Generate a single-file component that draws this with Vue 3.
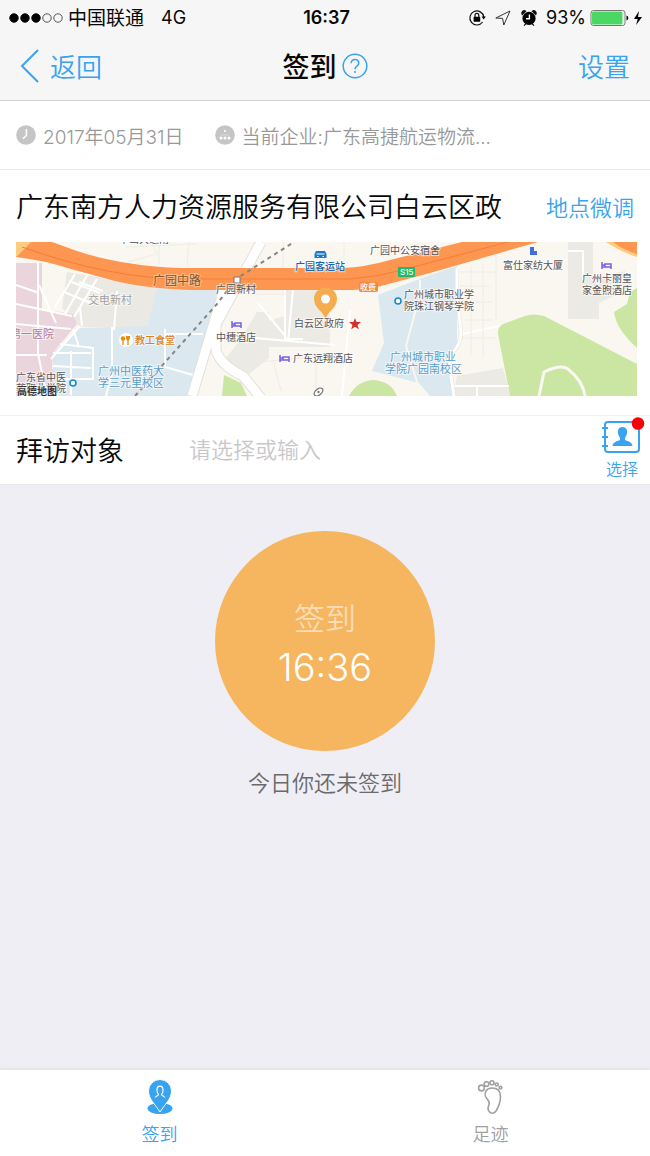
<template>
  <div class="pagina">
    <header class="topo">
      <div class="status">
        <div class="status-lado">
          <svg class="sinal" viewBox="0 0 54 12" aria-hidden="true">
            <circle v-for="n in 5" :key="n" :cx="n * 11 - 6" cy="6" r="4.2" :class="n <= 3 ? 'cheio' : 'vazio'" />
          </svg>
          <span class="operadora">中国联通</span>
          <span>4G</span>
        </div>
        <strong class="relogio">16:37</strong>
        <div class="status-lado direita">
          <svg class="icone-status" viewBox="0 0 18 18" aria-hidden="true">
            <path d="M15.8 8A7 7 0 1 0 14.6 13" fill="none" stroke="#111" stroke-width="1.2" />
            <path d="M13.6 7.6h4.2l-2.1 3z" />
            <rect x="5.6" y="7.8" width="6.6" height="5" rx=".6" />
            <path d="M7 8V6.3a1.9 1.9 0 0 1 3.8 0V8" fill="none" stroke="#111" stroke-width="1.2" />
          </svg>
          <svg class="icone-status" viewBox="0 0 18 18" aria-hidden="true">
            <path d="M16 2 9.8 16 8.6 9.4 1.8 9z" fill="none" stroke="#333" stroke-width="1" stroke-linejoin="round" />
          </svg>
          <svg class="icone-status" viewBox="0 0 18 18" aria-hidden="true">
            <circle cx="9" cy="9.4" r="6.6" />
            <path d="M2.2 5.4a2.4 2.4 0 0 1 3.4-3.2zM15.8 5.4a2.4 2.4 0 0 0-3.4-3.2zM4 16.6l2-2M14 16.6l-2-2" stroke="#111" stroke-width="1.3" />
            <path d="M9.4 5.4v4.4H6" fill="none" stroke="#fff" stroke-width="1.4" />
          </svg>
          <span>93%</span>
          <svg class="bateria" viewBox="0 0 54 18" aria-hidden="true">
            <rect x="1" y="1.5" width="34" height="15" rx="2.5" fill="#fff" stroke="#777" />
            <rect x="2" y="2.5" width="30.5" height="13" rx="1.5" fill="#4bd763" />
            <path d="M36.5 6.5a2.6 2.6 0 0 1 0 5z" />
            <path d="M49 2 44 10h3.700l-1.600 6 5.900-8h-4z" />
          </svg>
        </div>
      </div>

      <nav class="navegacao">
        <button class="botao-nav" type="button">
          <svg class="voltar" viewBox="0 0 20 34" aria-hidden="true"><path d="M18 1 2 17l16 16" /></svg>
          <span>返回</span>
        </button>
        <h1 class="titulo">
          <span>签到</span>
          <button class="ajuda" type="button" aria-label="帮助">
            <svg viewBox="0 0 26 26" aria-hidden="true">
              <circle cx="13" cy="13" r="11.8" />
              <path d="M9.2 10.300c0-5.200 7.800-5 7.600-.2-.1 3-3.800 3-3.800 6.200" />
              <path d="M13 18v2" />
            </svg>
          </button>
        </h1>
        <button class="botao-nav fim" type="button"><span>设置</span></button>
      </nav>
    </header>

    <section class="info">
      <span class="info-item">
        <svg class="info-icone" viewBox="0 0 20 20" aria-hidden="true">
          <circle cx="10" cy="10" r="9.8" />
          <path d="M10.400 4v6.500l-3.600 3.300" fill="none" stroke="#fff" stroke-width="1.5" />
        </svg>
        2017年05月31日
      </span>
      <span class="info-item">
        <svg class="info-icone" viewBox="0 0 20 20" aria-hidden="true">
          <circle cx="10" cy="10" r="9.8" />
          <g fill="#fff">
            <circle cx="10" cy="6" r="1.1" /><circle cx="6" cy="13" r="1.5" />
            <circle cx="10" cy="13" r="1.5" /><circle cx="14" cy="13" r="1.5" />
          </g>
          <path d="M5.500 10h9" fill="none" stroke="#fff" stroke-opacity=".5" stroke-width=".7" />
        </svg>
        当前企业:广东高捷航运物流...
      </span>
    </section>

    <section class="local">
      <div class="local-topo">
        <h2 class="local-nome">广东南方人力资源服务有限公司白云区政</h2>
        <button class="ajuste" type="button">地点微调</button>
      </div>

      <svg class="mapa" viewBox="0 0 621 154" role="img" aria-label="地图">
        <rect width="621" height="154" fill="#faf7f0" />

        <!-- quarteirões -->
        <path d="M51 30 141 45v26l-7 14H64L46 66z" fill="#ebe9e4" />
        <path d="M0 21h26v46l31 5 4 10-24 29-1 16H0z" fill="#ead5dd" />
        <path d="M141 46h67l-32 108H37v-43l27-25 68-2z" fill="#dbe8ef" />
        <path d="M0 127h37v27H0z" fill="#ead5dd" />
        <path d="M269 47h45v58h-69V81l24-7zM241 70h12v46l-24 19-24-13 17-21z" fill="#eceae5" />
        <path d="m362 53 52-20 27-9v82l-8 15 5 33h-24l-11-13-47-12 12-28z" fill="#dbe8ef" />
        <path d="M552 0h25v34l6 10v33h-31zM441 134l46-8 7 28h-57z" fill="#eceae5" />
        <path d="m583 35 26-6 8 16-34 16z" fill="#eceae5" />

        <!-- áreas verdes -->
        <path d="M494 154 482 92q-1-6 5-10l22-8q8-3 19 0l93 48v32z" fill="#cbe5a2" />
        <path d="m621 46-7 4-3 12-13 8q2 17 23 36zM333 154q8-15 24-16 18 1 24 16zM208 133l17 8 6 13h-25z" fill="#cbe5a2" />

        <!-- ruas secundárias -->
        <g class="ruas">
          <path d="m39 65 20-33M49 72l24-42M58 75l23-38M48 50l29 12M53 39l31 12M63 40l24 9M66 84l-2-18M98 88l3-39M64 84l-29 33M37 111h38M44 102l33 4v31H37M57 87l6 18M37 124l38 2M55 109v44M96 85v46l-6 23M149 87v38M149 125l28 8M149 92h38M22 20v92l9 42M0 43l23 8M0 62l56 12M0 82l55 5M0 113h31M23 43l17 38" />
          <path d="M242 61l28 34M269 47v50h18M239 96l80 7M277 47l-5 53M334 68l-8 86M446 92l37-8M552 9h15v29M437 144h56M461 144v10" />
        </g>
        <g class="contornos">
          <path d="m112 20 29-8-6-12M143 0v22M173 0l-2 24M110 5l70-3M204 52h66M245 120l60-6M257 118l8 31M328 0v27M267 0v26M300 118v36" />
          <path d="M444 30h38M444 44h30M448 60h28M448 78h28M446 96h34M455 24v90M467 22v94M480 12v66" />
        </g>
        <path d="M404 38v14l-14 52 14 46" fill="none" stroke="#faf7f0" stroke-width="2" />
        <path d="m208 47-32 107M245 0l-45 82v26q4 15 27 26l18 22" fill="none" stroke="#e3e0d8" stroke-width="11" />
        <path d="m208 47-32 107M245 0l-45 82v26q4 15 27 26l18 22" fill="none" stroke="#fff" stroke-width="9" />
        <path d="M441 26v24l4 40q0 12-8 20l-4 12 5 32" fill="none" stroke="#e3e0d8" stroke-width="4" />
        <path d="M441 26v24l4 40q0 12-8 20l-4 12 5 32" fill="none" stroke="#fff" stroke-width="3" />
        <path d="m523 154 5-24q17-8 24-3 15 12 17 27" fill="none" stroke="#faf8f2" stroke-width="3" />

        <!-- avenida principal -->
        <path d="M0 0h36l25 9q45 15 104 17h161q24-1 48-8l72-18h76L414 31l-49 13q-11 3-29 4H199q-58 1-100-9L55 27Q27 18 0 15z" fill="#fd9650" />
        <path d="M0 0h15Q7 9 0 15zM590 0h31v15q-16-5-31-15z" fill="#ffcb7e" />
        <path d="M6 5q86 31 160 32h168q27-2 52-9L492 0" fill="none" stroke="#f37e38" stroke-width="1" />
        <path d="M597 0h24v12q-14-4-24-12z" fill="#fd9650" />
        <path d="m119 154 82-92 19-25 58-37" fill="none" stroke="#858585" stroke-width="2" stroke-dasharray="4 4" />
        <path d="M218 35h6v6h-6z" fill="#fff" stroke="#777" />

        <!-- pontos de interesse -->
        <circle cx="110" cy="98" r="7" fill="#fff" />
        <path d="M107 97v6M112 97v6" stroke="#ec8c10" stroke-width="1.3" />
        <circle cx="107" cy="96.500" r="2.200" fill="#ec8c10" />
        <path d="M110 94h4v3l-2 2-2-2z" fill="#ec8c10" />
        <circle v-for="p in azuis" :key="p.x" :cx="p.x" :cy="p.y" r="3" fill="#fff" stroke="#168bd0" stroke-width="1.6" />
        <g v-for="h in hoteis" :key="h.x" fill="none" stroke="#7861e5" stroke-width="1.5">
          <path :d="`M${h.x} ${h.y}v7m0-2h9m0 2v-5h-6v3m-3-2h3`" />
        </g>
        <path d="M300 9h9l1.500 3v4h-12v-4z" fill="#187bcb" />
        <path d="M300.500 12h8M301 14.500h1.500M306.500 14.500h1.500" stroke="#fff" stroke-width="1" />
        <path d="M514 5h4v4h3v4h-7z" fill="#426ee0" />
        <rect x="343" y="40" width="19" height="10" rx="2" fill="#f58a35" />
        <rect x="382" y="25" width="17" height="10" rx="1" fill="#20ba6c" />
        <path d="m339 76 1.500 4h4.500l-3.500 3 1.300 4.300-3.800-2.500-3.800 2.500 1.300-4.300-3.500-3h4.500z" fill="#d62e2b" />
        <ellipse cx="302.500" cy="150" rx="5" ry="3" transform="rotate(-40 302.500 150)" fill="#fff" stroke="#777" stroke-width="1.300" />
        <circle cx="302.500" cy="150" r="1.200" fill="#777" />
        <path d="M309.500 77C307 69 298 66 298 57a11.500 11.500 0 0 1 23 0c0 9-9 12-11.500 20z" fill="#f5ac4e" />
        <circle cx="309.500" cy="57" r="4.500" fill="#fff" />

        <text v-for="r in rotulos" :key="r.texto" :x="r.x" :y="r.y" :class="['rotulo', r.tipo]">{{ r.texto }}</text>
      </svg>
    </section>

    <section class="visita">
      <label class="visita-rotulo" for="visita">拜访对象</label>
      <input id="visita" v-model="visita" class="visita-campo" type="text" placeholder="请选择或输入">
      <button class="escolher" type="button">
        <svg viewBox="0 0 44 38" aria-hidden="true">
          <rect x="5" y="3" width="34" height="30" rx="3" fill="none" stroke="#38a3ee" stroke-width="2" />
          <path d="M2 9h6M2 18h6M2 27h6" stroke="#38a3ee" stroke-width="2" />
          <path d="M22.500 8c-4 0-5 3-4.500 6.500.3 2 1.500 3 2 4.500v2c-3 1.200-7 2-7.500 6h20c-.5-4-4.500-4.800-7.500-6v-2c.5-1.500 1.700-2.500 2-4.500.5-3.500-.5-6.500-4.500-6.500z" fill="#38a3ee" />
          <circle cx="38" cy="4.500" r="6.300" fill="#f60008" />
        </svg>
        选择
      </button>
    </section>

    <main class="conteudo">
      <button class="botao-checkin" type="button">
        <span class="checkin-texto">签到</span>
        <span class="checkin-hora">16:36</span>
      </button>
      <p class="aviso">今日你还未签到</p>
    </main>

    <nav class="abas">
      <button
        v-for="aba in abas"
        :key="aba.id"
        class="aba"
        :class="{ ativa: abaAtual === aba.id }"
        type="button"
        @click="abaAtual = aba.id"
      >
        <svg v-if="aba.id === 'checkin'" viewBox="0 0 36 36" aria-hidden="true">
          <ellipse cx="18" cy="29.500" rx="12.500" ry="5.500" fill="currentColor" />
          <path d="M18 33C13 25 6.500 20 6.500 12a11.500 11.500 0 0 1 23 0C29.500 20 23 25 18 33z" fill="currentColor" stroke="#fff" stroke-width="1" />
          <path d="M13.200 18.500c.4-1.600 3.300-1.600 3.300-3-1.900-1.800-2.600-8.300 1.500-8.300s3.400 6.500 1.500 8.300c0 1.400 2.900 1.400 3.300 3" fill="none" stroke="#fff" stroke-width="1.200" />
        </svg>
        <svg v-else viewBox="0 0 36 36" aria-hidden="true">
          <g fill="none" stroke="currentColor" stroke-width="1.600">
            <circle cx="8.500" cy="9" r="2.900" /><circle cx="13.500" cy="5" r="2.300" />
            <circle cx="19" cy="3.800" r="2" /><circle cx="23.800" cy="5.500" r="1.500" /><circle cx="27.500" cy="8.700" r="1.300" />
            <path d="M19 9c-5.500 0-8 4.500-6.500 8.500 1.500 3.500 5 4 3.500 8-1 2.500-1.500 4-.5 6 1.500 3.500 5.500 3.500 7.500.5 2.500-4 4.500-10 4.500-14.500C27.500 12 24.500 9 19 9z" />
          </g>
        </svg>
        {{ aba.nome }}
      </button>
    </nav>
  </div>
</template>

<script setup>
import { ref } from 'vue'

const visita = ref('')
const abaAtual = ref('checkin')

const abas = [
  { id: 'checkin', nome: '签到' },
  { id: 'rastro', nome: '足迹' }
]

const azuis = [
  { x: 57, y: 141 },
  { x: 382, y: 59 }
]

const hoteis = [
  { x: 216, y: 79 },
  { x: 264, y: 113 },
  { x: 586, y: 20 }
]

// tipo: classe de cor do rótulo no mapa
const rotulos = [
  { texto: '广园中路', x: 137, y: 43, tipo: 'via' },
  { texto: '交电新村', x: 72, y: 62, tipo: 'apagado' },
  { texto: '第一医院', x: -6, y: 96, tipo: 'rosa' },
  { texto: '教工食堂', x: 119, y: 102, tipo: 'laranja' },
  { texto: '广东省中医', x: 0, y: 139, tipo: '' },
  { texto: '药职业学院', x: 0, y: 150, tipo: '' },
  { texto: '高德地图', x: 1, y: 153, tipo: 'marca' },
  { texto: '广州中医药大', x: 82, y: 133, tipo: 'azul' },
  { texto: '学三元里校区', x: 82, y: 145, tipo: 'azul' },
  { texto: '中山大道南', x: 103, y: 1, tipo: '' },
  { texto: '广园新村', x: 200, y: 51, tipo: '' },
  { texto: '中穗酒店', x: 200, y: 99, tipo: '' },
  { texto: '广园客运站', x: 279, y: 28, tipo: 'forte' },
  { texto: '白云区政府', x: 278, y: 85, tipo: '' },
  { texto: '广东远翔酒店', x: 277, y: 120, tipo: '' },
  { texto: '广园中公安宿舍', x: 354, y: 12, tipo: '' },
  { texto: '收费', x: 344, y: 48, tipo: 'placa' },
  { texto: 'S15', x: 384, y: 33, tipo: 'placa' },
  { texto: '广州城市职业学', x: 388, y: 56, tipo: '' },
  { texto: '院珠江钢琴学院', x: 388, y: 68, tipo: '' },
  { texto: '广州城市职业', x: 374, y: 119, tipo: 'azul' },
  { texto: '学院广园南校区', x: 369, y: 131, tipo: 'azul' },
  { texto: '富仕家纺大厦', x: 487, y: 27, tipo: '' },
  { texto: '广州卡丽皇', x: 566, y: 40, tipo: '' },
  { texto: '家金煦酒店', x: 566, y: 52, tipo: '' }
]
</script>

<style>
body {
  margin: 0;
}
</style>

<style scoped>
.pagina {
  min-height: 100vh;
  display: flex;
  flex-direction: column;
  background: #efeef5;
  color: #080808;
  font-family: Inter, "Noto Sans CJK SC", sans-serif;
  font-weight: 350;
}

button {
  padding: 0;
  border: none;
  background: none;
  color: #38a3ee;
  font: inherit;
  cursor: pointer;
}

/* ===== TOPO ===== */
.topo {
  background: #f6f6f6;
  border-bottom: 1px solid #d2d2d4;
}

.status {
  height: 32px;
  padding: 0 6px 0 9px;
  display: grid;
  grid-template-columns: 1fr auto 1fr;
  align-items: center;
  font-size: 18px;
  font-weight: 400;
  line-height: 34px;
}

.status-lado {
  display: flex;
  align-items: center;
}

.direita {
  justify-content: flex-end;
  gap: 8px;
}

.sinal {
  width: 54px;
  height: 12px;
  margin-right: 5px;
}

.cheio {
  fill: #000;
  stroke: #000;
}

.vazio {
  fill: none;
  stroke: #555;
  stroke-width: 1;
}

.operadora {
  margin-right: 17px;
  padding-top: 2px;
  font-size: 19px;
}

.relogio {
  font-weight: 600;
}

.icone-status {
  width: 18px;
  height: 18px;
}

.bateria {
  width: 54px;
  height: 18px;
  margin-left: -4px;
}

.navegacao {
  height: 68px;
  padding: 0 20px;
  display: grid;
  grid-template-columns: 1fr auto 1fr;
  align-items: center;
}

.botao-nav {
  display: flex;
  align-items: center;
  gap: 10px;
  font-size: 26px;
  line-height: 36px;
}

.botao-nav span,
.titulo span {
  padding-top: 4px;
}

.fim {
  justify-content: flex-end;
}

.voltar {
  width: 20px;
  height: 34px;
  fill: none;
  stroke: currentColor;
  stroke-width: 2;
}

.titulo {
  margin: 0;
  display: flex;
  align-items: center;
  gap: 5px;
  font-size: 27px;
  line-height: 36px;
  font-weight: 500;
}

.ajuda svg {
  display: block;
  width: 26px;
  height: 26px;
  fill: none;
  stroke: currentColor;
  stroke-width: 1.5;
}

/* ===== INFORMAÇÕES ===== */
.info {
  height: 68px;
  padding: 0 16px;
  display: flex;
  align-items: center;
  gap: 31px;
  background: #fff;
  border-bottom: 1px solid #e8e8e8;
  color: #999;
  font-size: 19px;
}

.info-item {
  display: flex;
  align-items: center;
  gap: 7px;
  white-space: nowrap;
}

.info-icone {
  width: 20px;
  height: 20px;
  fill: #c5c5c5;
}

/* ===== LOCAL ===== */
.local {
  padding: 0 13px 19px 16px;
  background: #fff;
  border-bottom: 1px solid #f0f0f2;
}

.local-topo {
  height: 68px;
  padding: 4px 3px 0 0;
  display: flex;
  align-items: center;
  justify-content: space-between;
}

.local-nome {
  margin: 0;
  font-size: 27px;
  line-height: 36px;
  font-weight: 350;
  white-space: nowrap;
}

.ajuste {
  font-size: 22px;
  line-height: 36px;
}

.mapa {
  display: block;
  width: 100%;
  height: auto;
}

.ruas {
  fill: none;
  stroke: #fff;
  stroke-width: 2;
}

.contornos {
  fill: none;
  stroke: #eeece6;
  stroke-width: 1;
}

.rotulo {
  font-size: 10px;
  font-weight: 400;
  fill: #55555a;
  stroke: #fff;
  stroke-width: 2px;
  stroke-opacity: 0.6;
  paint-order: stroke;
}

.via {
  font-size: 12px;
  fill: #81572f;
  stroke: #ffd9b8;
}

.apagado {
  font-size: 11px;
  fill: #a0a0a0;
}

.rosa {
  font-size: 11px;
  fill: #b27c98;
}

.laranja {
  font-weight: 500;
  fill: #df8314;
}

.azul {
  font-size: 11px;
  fill: #5b9ec9;
}

.forte {
  font-weight: 500;
  fill: #1767b3;
}

.marca {
  font-weight: 700;
  fill: #333;
}

.placa {
  font-size: 8px;
  font-weight: 500;
  fill: #fff;
  stroke: none;
}

/* ===== VISITA ===== */
.visita {
  height: 68px;
  padding: 0 6px 0 16px;
  display: flex;
  align-items: center;
  background: #fff;
  border-bottom: 1px solid #e9e8ed;
}

.visita-rotulo {
  flex: 0 0 173px;
  padding-top: 4px;
  font-size: 27px;
  line-height: 36px;
}

.visita-campo {
  flex: 1;
  min-width: 0;
  padding: 0;
  border: none;
  outline: none;
  background: none;
  font: inherit;
  font-size: 22px;
  line-height: 36px;
}

.visita-campo::placeholder {
  color: #c8c8cc;
  opacity: 1;
}

.escolher {
  display: flex;
  flex-direction: column;
  align-items: center;
  font-size: 16px;
  line-height: 24px;
}

.escolher svg {
  width: 44px;
  height: 38px;
  overflow: visible;
}

/* ===== CHECK-IN ===== */
.conteudo {
  flex: 1;
  padding-top: 46px;
  display: flex;
  flex-direction: column;
  align-items: center;
}

.botao-checkin {
  width: 220px;
  height: 220px;
  padding-top: 4px;
  display: flex;
  flex-direction: column;
  align-items: center;
  justify-content: center;
  border-radius: 50%;
  background: #f6b55f;
  color: #fff;
}

.checkin-texto {
  font-size: 31px;
  line-height: 48px;
  color: #fbdcb5;
}

.checkin-hora {
  font-size: 38px;
  line-height: 48px;
}

.aviso {
  margin: 14px 0 0;
  color: #6a6a6d;
  font-size: 22px;
  line-height: 36px;
}

/* ===== ABAS ===== */
.abas {
  height: 86px;
  display: grid;
  grid-template-columns: 1fr 1fr;
  gap: 12px;
  background: #fff;
  box-shadow: 0 -1px 3px #dddce2;
}

.aba {
  display: flex;
  flex-direction: column;
  align-items: center;
  justify-content: center;
  gap: 8px;
  color: #a0a0a0;
  font-size: 18px;
  line-height: 24px;
}

.aba svg {
  width: 36px;
  height: 36px;
}

.ativa {
  color: #38a3ee;
}
</style>
